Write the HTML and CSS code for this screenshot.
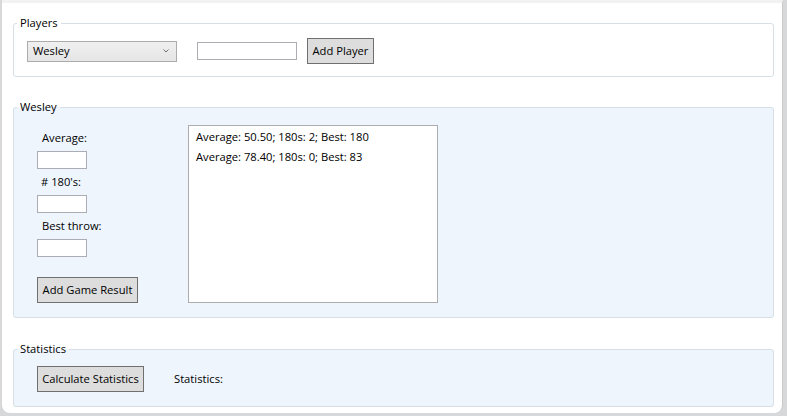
FILE: index.html
```html
<!DOCTYPE html>
<html>
<head>
<meta charset="utf-8">
<link rel="stylesheet" href="styles.css">
</head>
<body>
<div class="window">
  <fieldset class="group group-players">
    <legend class="group-title">Players</legend>
    <div class="group-content players-row">
      <div class="combo">
        <span class="combo-text">Wesley</span>
        <svg class="combo-chevron" width="6" height="4" viewBox="0 0 6 4"><polyline points="0.5,0.5 3,3 5.5,0.5" fill="none" stroke="#707070" stroke-width="1"/></svg>
      </div>
      <div class="textbox textbox-name"></div>
      <button class="btn btn-add-player">Add Player</button>
    </div>
  </fieldset>

  <fieldset class="group group-blue group-player">
    <legend class="group-title">Wesley</legend>
    <div class="group-content player-body">
      <div class="player-form">
        <div class="label">Average:</div>
        <div class="textbox textbox-small"></div>
        <div class="label label-180">#&nbsp;180's:</div>
        <div class="textbox textbox-small"></div>
        <div class="label">Best throw:</div>
        <div class="textbox textbox-small"></div>
        <button class="btn btn-add-result">Add Game Result</button>
      </div>
      <div class="listbox">
        <div class="list-item">Average: 50.50; 180s: 2; Best: 180</div>
        <div class="list-item">Average: 78.40; 180s: 0; Best: 83</div>
      </div>
    </div>
  </fieldset>

  <fieldset class="group group-blue group-stats">
    <legend class="group-title">Statistics</legend>
    <div class="group-content stats-row">
      <button class="btn btn-calc">Calculate Statistics</button>
      <div class="label label-stats">Statistics:</div>
    </div>
  </fieldset>
</div>
</body>
</html>
```

FILE: styles.css
```css
* {
  box-sizing: border-box;
}

html, body {
  margin: 0;
  padding: 0;
}

body {
  width: 787px;
  height: 416px;
  overflow: hidden;
  background: #d6d8da;
  font-family: "Open Sans", "Noto Sans", sans-serif;
  font-size: 11.2px;
  color: #000;
}

.window {
  margin-left: 2px;
  width: 781px;
  height: 413px;
  background: #fff;
  border-top: 3px solid #f2f2f2;
  border-right: 1px solid #c9c9c9;
  border-radius: 0 0 8px 8px;
  padding: 12px 8px 0 11px;
  display: flex;
  flex-direction: column;
}

.group {
  margin: 0;
  padding: 0;
  min-width: 0;
  width: 761px;
  border: 1px solid #d5dfe5;
  border-radius: 3px;
}

.group-blue {
  background: #eef5fd;
}

.group-title {
  margin-left: 3px;
  padding: 0 3px;
  line-height: 16px;
  height: 16px;
}

.group-players .group-content {
  padding: 7px 0 12px 13px;
}

.group-player {
  margin-top: 22px;
}

.group-player .group-content {
  padding: 10px 0 14px 23px;
}

.group-stats {
  margin-top: 23px;
}

.group-stats .group-content {
  padding: 9px 0 14px 23px;
}

/* Players row */
.players-row {
  display: flex;
  align-items: center;
  box-sizing: content-box;
  height: 26px;
}

.combo {
  width: 150px;
  height: 21px;
  border: 1px solid #acacac;
  background: linear-gradient(#f0f0f0, #e5e5e5);
  display: flex;
  align-items: center;
  justify-content: space-between;
  padding: 0 7px 0 5px;
  line-height: 16px;
}

.combo-chevron {
  display: block;
}

.textbox {
  background: #fff;
  border: 1px solid #abadb3;
  height: 18px;
}

.textbox-name {
  width: 100px;
  margin-left: 20px;
}

.btn {
  font-family: inherit;
  font-size: 11.2px;
  color: #000;
  background: #dddddd;
  border: 1px solid #707070;
  border-radius: 0;
  height: 26px;
  padding: 0;
  line-height: 16px;
}

.btn-add-player {
  width: 67px;
  margin-left: 10px;
}

/* Player details */
.player-body {
  display: flex;
  gap: 50px;
}

.player-form {
  width: 101px;
  display: flex;
  flex-direction: column;
  align-items: flex-start;
}

.label {
  height: 26px;
  padding: 5px;
  line-height: 16px;
}

.label-180 {
  padding-left: 4px;
}

.textbox-small {
  width: 50px;
}

.btn-add-result {
  width: 101px;
  margin-top: 20px;
}

.listbox {
  width: 250px;
  height: 178px;
  background: #fff;
  border: 1px solid #acacac;
  padding-top: 1px;
}

.list-item {
  height: 20px;
  line-height: 20px;
  padding-left: 7px;
}

/* Statistics */
.stats-row {
  display: flex;
  align-items: center;
}

.btn-calc {
  width: 107px;
}

.label-stats {
  margin-left: 25px;
}
```
